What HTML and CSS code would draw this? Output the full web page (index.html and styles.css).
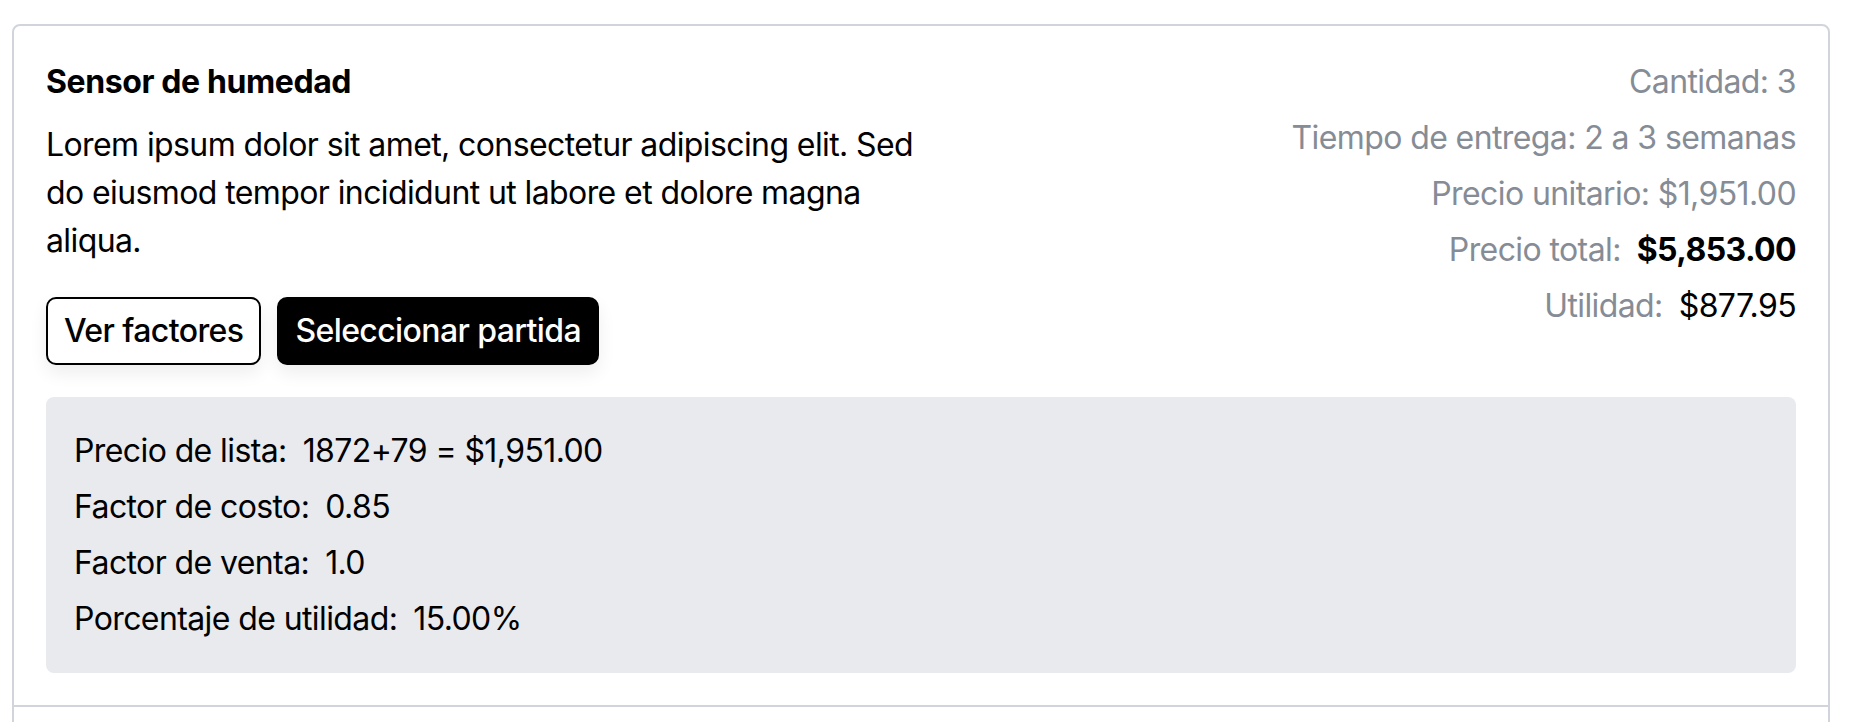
FILE: index.html
```html
<!DOCTYPE html>
<html lang="es">
<head>
  <meta charset="UTF-8" />
  <meta name="viewport" content="width=device-width, initial-scale=1.0" />
  <title>Partidas de cotización</title>
  <link rel="stylesheet" href="styles.css">
</head>
<body>
  <ul class="partidas">
    <li class="partida">
      <div class="partida-main">
        <div class="partida-info">
          <h3 class="partida-title">Sensor de humedad</h3>
          <p class="partida-desc">Lorem ipsum dolor sit amet, consectetur adipiscing elit. Sed do eiusmod tempor incididunt ut labore et dolore magna aliqua.</p>
          <div class="partida-actions">
            <button class="btn btn-outline">Ver factores</button>
            <button class="btn btn-dark">Seleccionar partida</button>
          </div>
        </div>

        <div class="partida-summary">
          <p>Cantidad: 3</p>
          <p>Tiempo de entrega: 2 a 3 semanas</p>
          <p>Precio unitario: $1,951.00</p>
          <p>Precio total:<span class="value value-strong">$5,853.00</span></p>
          <p>Utilidad:<span class="value">$877.95</span></p>
        </div>
      </div>

      <!-- Factores de la partida -->
      <div class="factores">
        <p>Precio de lista:<span class="factor">1872+79 = $1,951.00</span></p>
        <p>Factor de costo:<span class="factor">0.85</span></p>
        <p>Factor de venta:<span class="factor">1.0</span></p>
        <p>Porcentaje de utilidad:<span class="factor">15.00%</span></p>
      </div>
    </li>
    <li class="partida partida-next"></li>
  </ul>
</body>
</html>
```

FILE: styles.css
```css
body {
  margin: 0;
  font-family: Inter, 'Liberation Sans', sans-serif;
  background-color: #fff;
  color: #000;
  font-size: 32px;
  line-height: 48px;
  letter-spacing: -0.6px;
}

p {
  margin: 0;
}

.partidas {
  list-style: none;
  margin: 24px 36px 0 12px;
  padding: 0;
  border: 2px solid #d1d5db;
  border-radius: 8px 8px 0 0;
}

.partida {
  padding: 32px;
  border-bottom: 2px solid #d1d5db;
}

.partida-next {
  min-height: 120px;
}

.partida-main {
  display: flex;
  justify-content: space-between;
  align-items: flex-start;
}

.partida-info {
  max-width: 885px;
}

.partida-title {
  margin: 0 0 15px;
  font-size: 32px;
  line-height: 48px;
  font-weight: 700;
  letter-spacing: -0.4px;
}

.partida-actions {
  display: flex;
  gap: 16px;
  margin-top: 32px;
}

.btn {
  font-family: inherit;
  font-size: 32px;
  line-height: 48px;
  font-weight: 500;
  letter-spacing: -0.6px;
  padding: 8px 16px;
  border-radius: 10px;
  border: 2px solid #000;
  cursor: pointer;
  box-shadow: 0 8px 18px rgba(0,0,0,0.07);
}

.btn-outline {
  background-color: #fff;
  color: #000;
}

.btn-dark {
  background-color: #000;
  color: #fff;
}

.partida-summary {
  display: flex;
  flex-direction: column;
  align-items: flex-end;
  gap: 8px;
  color: #868c95;
}

.value {
  margin-left: 16px;
  color: #000;
}

.value-strong {
  font-weight: 700;
}

.factores {
  margin-top: 32px;
  padding: 30px 28px;
  background-color: #e9eaee;
  border-radius: 8px;
  display: flex;
  flex-direction: column;
  gap: 8px;
}

.factor {
  margin-left: 16px;
}
```
